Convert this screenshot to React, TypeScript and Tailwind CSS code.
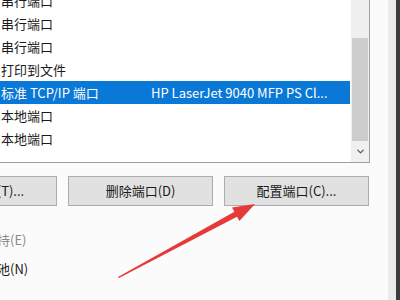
import { ChevronDown } from "lucide-react";

const font = { fontFamily: '"Noto Sans CJK SC", "Noto Sans", sans-serif' };

// 端口列表（左侧的端口名列在截图外）
const ports = [
  { desc: "串行端口", printer: "" },
  { desc: "串行端口", printer: "" },
  { desc: "串行端口", printer: "" },
  { desc: "打印到文件", printer: "" },
  { desc: "标准 TCP/IP 端口", printer: "HP LaserJet 9040 MFP PS Cl...", selected: true },
  { desc: "本地端口", printer: "" },
  { desc: "本地端口", printer: "" },
];

function PortList() {
  return (
    <div className="flex h-[174px] -mt-[11px] border-r border-b border-[#a0a0a0] bg-white overflow-hidden">
      <div className="flex-1 flex flex-col">
        {ports.map((p, i) => (
          <div
            key={i}
            className={
              "h-[23px] shrink-0 flex items-center text-[13px] leading-none " +
              (p.selected ? "bg-[#0a78d6] text-white" : "text-[#1a1a1a]")
            }
          >
            <span className="w-[151px] pl-px whitespace-nowrap">{p.desc}</span>
            <span className="whitespace-nowrap">{p.printer}</span>
          </div>
        ))}
      </div>
      <div className="w-[18px] ml-[1px] bg-[#f0f0f0] flex flex-col">
        <div className="h-[49px]" />
        <div className="h-[103px] bg-[#cdcdcd] mx-px" />
        <div className="flex-1 flex items-center justify-center text-[#606060]">
          <ChevronDown size={11} strokeWidth={3} />
        </div>
      </div>
    </div>
  );
}

function Btn({ label }: { label: string }) {
  return (
    <button className="w-[145px] h-[30px] shrink-0 bg-[#e1e1e1] border border-[#adadad] text-[13px] text-[#1a1a1a]">
      {label}
    </button>
  );
}

function Check({ label, disabled }: { label: string; disabled?: boolean }) {
  return (
    <label className={"flex items-center gap-[6px] text-[13px] whitespace-nowrap " + (disabled ? "text-[#8a8a8a]" : "text-[#1a1a1a]")}>
      <span className={"w-[13px] h-[13px] border bg-white " + (disabled ? "border-[#bcbcbc]" : "border-[#333]")} />
      {label}
    </label>
  );
}

function Arrow() {
  return (
    <svg className="absolute left-0 top-0 pointer-events-none" width="400" height="300" viewBox="0 0 400 300">
      <polygon
        points="118,277 234.4,211.8 232,207.6 255,204 239.4,221 237,216.8 119,278"
        fill="#e53a3a"
      />
    </svg>
  );
}

export default function App() {
  return (
    <div className="relative w-[400px] h-[300px] overflow-hidden flex bg-[#fbfbfb]" style={font}>
      <div className="w-[388px] flex flex-col">
        <div className="w-[370px]">
          <PortList />
        </div>

        <div className="flex gap-[11px] mt-[13px] -ml-[88px]">
          <Btn label="添加端口(T)..." />
          <Btn label="删除端口(D)" />
          <Btn label="配置端口(C)..." />
        </div>

        <div className="flex flex-col gap-[9px] mt-[24px] -ml-[87px]">
          <Check label="启用双向支持(E)" disabled />
          <Check label="启用打印机池(N)" />
        </div>
      </div>
      <div className="w-[8px] bg-[#ebebeb]" />
      <div className="flex-1 bg-[#3c3c3c]" />
      <Arrow />
    </div>
  );
}
